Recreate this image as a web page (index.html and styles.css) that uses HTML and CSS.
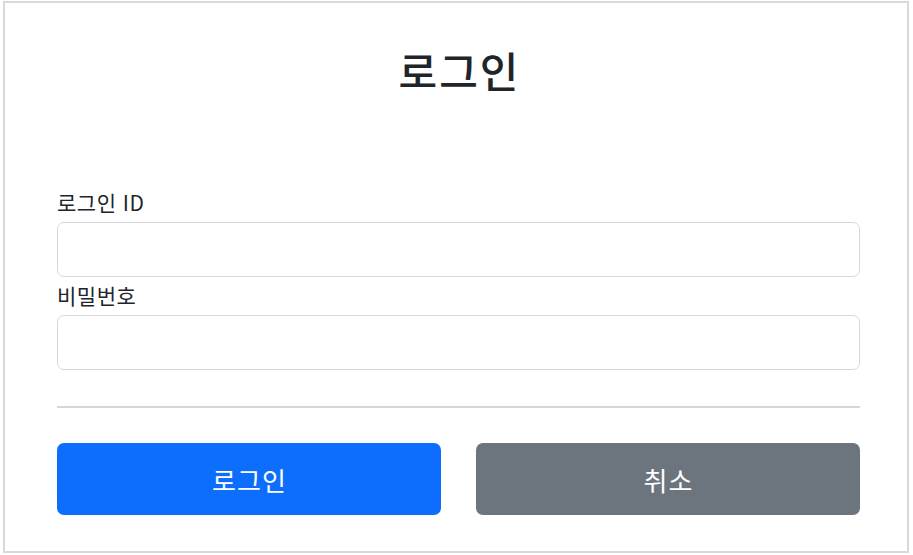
FILE: index.html
```html
<!DOCTYPE html>
<html lang="ko">
<head>
<meta charset="utf-8">
<title>로그인</title>
<link rel="stylesheet" href="styles.css">
</head>
<body>
<div class="frame">
  <div class="content">
    <h2 class="title">로그인</h2>
    <form class="form">
      <label class="form-label" for="loginId">로그인 ID</label>
      <input class="form-control" type="text" id="loginId">
      <label class="form-label" for="password">비밀번호</label>
      <input class="form-control" type="password" id="password">
      <hr class="divider">
      <div class="buttons">
        <button class="btn btn-primary" type="button">로그인</button>
        <button class="btn btn-secondary" type="button">취소</button>
      </div>
    </form>
  </div>
</div>
</body>
</html>
```

FILE: styles.css
```css
* { box-sizing: border-box; }
html, body {
  margin: 0;
  padding: 0;
  background: #fff;
}
body {
  font-family: "Noto Sans CJK KR", "Noto Sans", sans-serif;
  color: #212529;
}
.frame {
  margin: 1px 0 0 3px;
  width: 906px;
  height: 552px;
  border: 2px solid #d9d9d9;
}
.content {
  padding: 43px 47px 0 52px;
}
.title {
  margin: 0 0 90px 0;
  text-align: center;
  font-size: 42px;
  line-height: 48px;
  font-weight: 500;
  letter-spacing: 2px;
  padding-left: 2px;
}
.form {
  display: flex;
  flex-direction: column;
}
.form-label {
  font-size: 21px;
  line-height: 30px;
  padding-top: 3px;
  margin-bottom: 5px;
  letter-spacing: 0.5px;
}
.form-control {
  display: block;
  width: 100%;
  height: 55px;
  border: 1.5px solid #d3d8de;
  border-radius: 7px;
  background: #fff;
  font-size: 20px;
  padding: 0 15px;
  font-family: inherit;
}
.divider {
  margin: 36px 0 0 0;
  border: 0;
  height: 2px;
  background: #d6d6d6;
}
.buttons {
  margin-top: 35px;
  display: flex;
  gap: 35px;
}
.btn {
  flex: 1;
  height: 72px;
  border: 0;
  border-radius: 7px;
  color: #fff;
  font-size: 26px;
  font-family: inherit;
  font-weight: 400;
  letter-spacing: 1px;
  padding: 0 0 0 1px;
}
.btn-primary { background: #0d6efd; }
.btn-secondary { background: #6c757d; }
```
